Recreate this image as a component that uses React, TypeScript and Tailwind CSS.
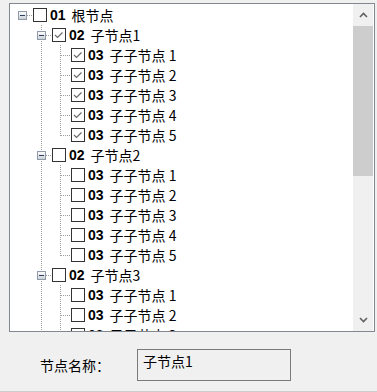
import React from "react";

type Node = {
  code: string;
  label: string;
  checked: boolean;
  children?: Node[];
};

const tree: Node = {
  code: "01",
  label: "根节点",
  checked: false,
  children: [1, 2, 3, 4, 5].map((i) => ({
    code: "02",
    label: `子节点${i}`,
    checked: i === 1,
    children: [1, 2, 3, 4, 5].map((j) => ({
      code: "03",
      label: `子子节点 ${j}`,
      checked: i === 1,
    })),
  })),
};

type FlatRow = {
  node: Node;
  depth: number;
  isLast: boolean;
  rails: boolean[]; // per ancestor column: does the line continue
};

function flatten(node: Node, depth: number, isLast: boolean, rails: boolean[], out: FlatRow[]) {
  out.push({ node, depth, isLast, rails });
  const kids = node.children ?? [];
  kids.forEach((k, i) => {
    flatten(k, depth + 1, i === kids.length - 1, [...rails, depth > 0 ? !isLast : false], out);
  });
  return out;
}

const DOT = "#a0a0a0";

function Rail({ on }: { on: boolean }) {
  return (
    <svg width={19} height={20} className="block shrink-0" shapeRendering="crispEdges">
      {on && <line x1={10.5} y1={0} x2={10.5} y2={20} stroke={DOT} strokeDasharray="1 1" />}
    </svg>
  );
}

function Joint({ depth, isLast, expander }: { depth: number; isLast: boolean; expander: boolean }) {
  return (
    <svg width={21} height={20} className="block shrink-0" shapeRendering="crispEdges">
      {depth > 0 && (
        <line x1={10.5} y1={0} x2={10.5} y2={isLast ? 11 : 20} stroke={DOT} strokeDasharray="1 1" />
      )}
      <line x1={expander ? 15 : 11} y1={10.5} x2={21} y2={10.5} stroke={DOT} strokeDasharray="1 1" />
      {expander && (
        <g>
          <defs>
            <linearGradient id="exp" x1="0" y1="0" x2="0" y2="1">
              <stop offset="0" stopColor="#ffffff" />
              <stop offset="1" stopColor="#c8cdd4" />
            </linearGradient>
          </defs>
          <rect x={6.5} y={6.5} width={8} height={8} fill="url(#exp)" stroke="#8f9aa8" />
          <line x1={8} y1={10.5} x2={13} y2={10.5} stroke="#2f3e5a" />
        </g>
      )}
    </svg>
  );
}

function Check({ on }: { on: boolean }) {
  return (
    <svg width={14} height={14} className="block shrink-0">
      <rect x={0.5} y={0.5} width={13} height={13} fill="#fff" stroke="#333" shapeRendering="crispEdges" />
      {on && (
        <polyline points="3,7 5.5,9.5 10.5,4.5" fill="none" stroke="#6b6b6b" strokeWidth={1.2} />
      )}
    </svg>
  );
}

function Chevron({ up }: { up: boolean }) {
  return (
    <svg width={9} height={6} className="block">
      <polyline
        points={up ? "1,5 4.5,1.5 8,5" : "1,1 4.5,4.5 8,1"}
        fill="none"
        stroke="#606060"
        strokeWidth={1.6}
      />
    </svg>
  );
}

export default function App() {
  const rows = flatten(tree, 0, true, [], []);
  return (
    <div className="w-[377px] h-[392px] bg-[#f0f0f0] border-b border-[#cccccc] pt-[3px] pl-[9px] font-['Noto_Sans_CJK_SC',sans-serif] text-[14px] text-black">
      <div className="w-[366px] h-[329px] border border-[#828790] bg-white flex">
        <div className="flex-1 overflow-hidden pt-[1px] pl-[2px]">
          {rows.map((r, i) => (
            <div key={i} className="flex items-center h-[20px] leading-[20px] whitespace-nowrap">
              {r.rails.map((on, k) => (
                <Rail key={k} on={on} />
              ))}
              <Joint depth={r.depth} isLast={r.isLast} expander={!!r.node.children} />
              <Check on={r.node.checked} />
              <span className="ml-[3px] font-['Liberation_Sans',sans-serif] font-bold text-[14px]">
                {r.node.code}
              </span>
              <span className="ml-[6px]">{r.node.label}</span>
            </div>
          ))}
        </div>
        <div className="w-[20px] mr-[1px] bg-[#f0f0f0] flex flex-col">
          <div className="h-[22px] flex items-center justify-center">
            <Chevron up />
          </div>
          <div className="h-[150px] bg-[#cdcdcd]" />
          <div className="flex-1" />
          <div className="h-[22px] flex items-center justify-center">
            <Chevron up={false} />
          </div>
        </div>
      </div>
      <div className="flex items-start mt-[17px]">
        <div className="w-[128px] pl-[31px] mt-[6px] leading-[20px]">节点名称：</div>
        <div className="w-[154px] h-[32px] border border-[#7a7a7a] px-[5px] pt-[1px] leading-[20px]">
          子节点1
        </div>
      </div>
    </div>
  );
}
